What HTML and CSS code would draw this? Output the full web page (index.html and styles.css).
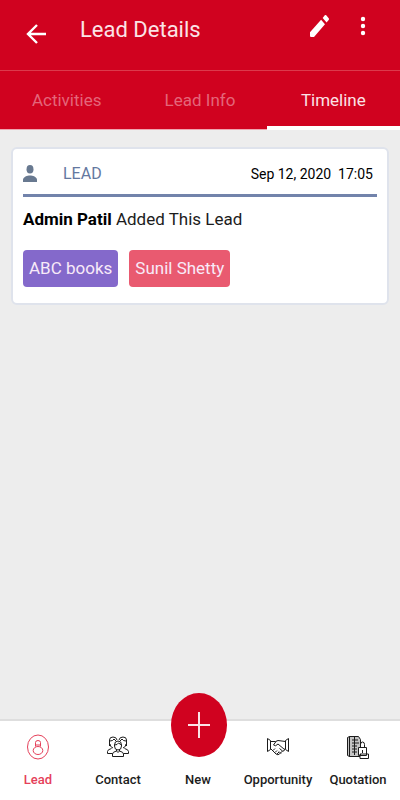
FILE: index.html
```html
<!DOCTYPE html>
<html lang="en">
<head>
<meta charset="utf-8">
<meta name="viewport" content="width=device-width, initial-scale=1">
<title>Lead Details</title>
<link rel="stylesheet" href="styles.css">
</head>
<body>
<header class="app-bar">
  <button class="icon-button back-button" type="button" aria-label="Back">
    <svg class="back-icon" viewBox="0 0 20 22" fill="none" stroke="currentColor" stroke-width="2.400"><path d="M20 11H2M11 2 2 11l9 9"/></svg>
  </button>
  <h1 class="title">Lead Details</h1>
  <button class="icon-button" type="button" aria-label="Edit">
    <svg class="edit-icon" viewBox="3 3 18 18" preserveAspectRatio="none" fill="currentColor"><path d="M3 17.200V20q0 1 1 1h2.800L17.200 10.500 13.500 6.800zM20.700 7a1 1 0 0 0 0-1.400l-2.300-2.300a1 1 0 0 0-1.400 0l-2 2.100 3.700 3.700z"/></svg>
  </button>
  <button class="icon-button" type="button" aria-label="More options">
    <svg class="more-icon" viewBox="0 0 6 20" fill="currentColor"><circle cx="3" cy="3" r="2.200"/><circle cx="3" cy="10" r="2.200"/><circle cx="3" cy="17" r="2.200"/></svg>
  </button>
</header>
<nav class="tabs" aria-label="Lead sections">
  <a class="tab" href="#activities">Activities</a>
  <a class="tab" href="#info">Lead Info</a>
  <a class="tab tab-active" href="#timeline" aria-current="page">Timeline</a>
</nav>
<main class="content">
  <article class="card">
    <div class="card-head">
      <svg class="person-icon" viewBox="0 0 16 18" preserveAspectRatio="none" fill="currentColor"><ellipse cx="8" cy="4.500" rx="4" ry="4.500"/><path d="M0 18v-2.500c0-3 5-4.500 8-4.500s8 1.500 8 4.500V18z"/></svg>
      <span class="kind">LEAD</span>
      <time class="date" datetime="2020-09-12T17:05">Sep 12, 2020&nbsp; 17:05</time>
    </div>
    <p class="event"><strong class="author">Admin Patil</strong> Added This Lead</p>
    <div class="tags">
      <span class="tag tag-company">ABC books</span>
      <span class="tag tag-person">Sunil Shetty</span>
    </div>
  </article>
</main>
<nav class="bottom-nav" aria-label="Main">
  <a class="nav-item nav-active" href="#lead">
    <svg class="nav-icon" viewBox="0 0 24 26" fill="none" stroke="currentColor"><ellipse cx="12" cy="13" rx="10.500" ry="12"/><path d="M9.500 12.500V8.500q0-2 2.500-2t2.500 2v4M9.500 11h5"/><ellipse cx="12" cy="16.500" rx="4.800" ry="4"/></svg>
    <span>Lead</span>
  </a>
  <a class="nav-item" href="#contact">
    <svg class="nav-icon" viewBox="0 0 24 26" fill="none" stroke="currentColor"><path d="M3.500 12V6q0-3 3.500-3t4 3M4 7q3 0 4-2l2 2M20.500 12V6q0-3-3.500-3t-4 3M20 7q-3 0-4-2l-2 2M4 10q0 3 3 4M20 10q0 3-3 4M1.500 19.500v-2q0-2 4-3M22.500 19.500v-2q0-2-4-3M1.500 19.500h5M22.500 19.500h-5"/><path d="M8.500 11q0-4 3.500-4t3.500 4v1q0 4-3.500 4t-3.500-4zM8.500 11q3 0 4-2l3 2M10.500 15.500V17L12 18.500l1.500-1.500v-1.500M6.500 22.500V20q0-2 4-3M17.500 22.500V20q0-2-4-3M6.500 22.500h11"/></svg>
    <span>Contact</span>
  </a>
  <a class="nav-item" href="#new">
    <span class="fab">
      <svg class="plus-icon" viewBox="0 0 22 26" fill="none" stroke="currentColor" stroke-width="2"><path d="M11 0v26M0 13h22"/></svg>
    </span>
    <span>New</span>
  </a>
  <a class="nav-item" href="#opportunity">
    <svg class="nav-icon" viewBox="0 0 24 26" fill="none" stroke="currentColor"><path d="M1.500 4.500v13M1.500 4.500l3 2v9l-3 2M22.500 4.500v13M22.500 4.500l-3 2v9l3 2M4.500 7.500h5L12 6.500l7.500 1M10 7.500 7.500 11q2 2 4.500-1l6.500 5.500q0 2-2 1.500l-3-2.500M4.500 14.500 10 20q2 1.500 3.500 0l3-3M7 16.500l2-2M9 18.500l2-2M11 20l2-2M13 17.500l2 2M19.500 14.500l-1.500 1"/></svg>
    <span>Opportunity</span>
  </a>
  <a class="nav-item" href="#quotation">
    <svg class="nav-icon" viewBox="0 0 24 26" fill="none" stroke="currentColor"><path fill="#c4c4c4" d="M1.500 3.500v18l2 1v-20zM3.500 2.500h9l2 3v17h-11z"/><path d="M6 6h6M6 9h7M6 12h5M6 15h5M6 18h5M8.500 3v18"/><path d="M14.500 13.500v-3q0-2.500 2-2.500t2 2.500v3"/><path fill="#fff" d="M14 20v4.500h8.500V20zM12.500 13.500h8v8h-8z"/><path d="M16.500 16v3"/></svg>
    <span>Quotation</span>
  </a>
</nav>
</body>
</html>
```

FILE: styles.css
```css
* { box-sizing: border-box; }

body {
  margin: 0;
  min-height: 100vh;
  display: flex;
  flex-direction: column;
  background: #ededed;
  color: #1c1c1c;
  font-family: Roboto, "Liberation Sans", sans-serif;
  font-size: 17px;
}

a { color: inherit; text-decoration: none; }
svg { display: block; }

.app-bar {
  display: flex;
  align-items: flex-start;
  height: 71px;
  padding: 10px 21px 0 20px;
  background: #d0021f;
  border-bottom: 1px solid #dc3a4c;
  color: #fff;
}

.icon-button {
  display: grid;
  place-items: center;
  width: 32px;
  height: 32px;
  padding: 0;
  border: 0;
  background: none;
  color: inherit;
}

.back-button { margin-top: 8px; }
.icon-button:last-child { margin-left: 12px; }

.back-icon { width: 20px; height: 22px; }
.edit-icon { width: 19px; height: 22px; }
.more-icon { width: 6px; height: 20px; }

.title {
  flex: 1;
  margin: 0 0 0 28px;
  color: #fbe3e6;
  font-size: 22px;
  font-weight: 400;
  line-height: 40px;
}

.tabs {
  display: grid;
  grid-template-columns: repeat(3, 1fr);
  background: #d0021f;
  color: #e4667a;
  line-height: 59px;
  text-align: center;
}

.tab { box-shadow: inset 0 -1px #efa6b0; }
.tab-active { box-shadow: inset 0 -4px #fff; color: #fbe3e6; }

.content { flex: 1; padding: 17px 11px; }

.card {
  padding: 10px;
  background: #fff;
  border: 2px solid #dfe3ec;
  border-radius: 6px;
}

.card-head {
  display: flex;
  align-items: center;
  height: 38px;
  padding: 0 4px 6px 0;
  border-bottom: 3px solid #7283ab;
}

.person-icon { width: 14px; height: 17px; color: #687990; }
.kind { margin-left: 26px; color: #6478a0; font-size: 16px; }
.date { margin-left: auto; color: #000; font-size: 14px; }

.event { margin: 10px 0 19px; line-height: 24px; }
.author { color: #000; font-weight: 700; }

.tags { display: flex; gap: 11px; padding-bottom: 6px; }

.tag {
  padding: 0 6px;
  border-radius: 4px;
  color: #f8eaf8;
  line-height: 37px;
}

.tag-company { background: #8469cb; }
.tag-person { background: #e95a70; }

.bottom-nav {
  display: grid;
  grid-template-columns: repeat(5, 1fr);
  height: 81px;
  background: #fff;
  border-top: 2px solid #dedede;
  font-size: 13px;
  font-weight: 500;
}

.nav-item {
  position: relative;
  display: flex;
  flex-direction: column;
  align-items: center;
  justify-content: flex-end;
  gap: 11px;
  padding: 0 4px 11px 0;
  line-height: 18px;
}

.nav-active { color: #e5405a; }
.nav-icon { width: 24px; height: 26px; }

.fab {
  position: absolute;
  top: -28px;
  left: 50%;
  display: grid;
  place-items: center;
  width: 56px;
  height: 64px;
  margin-left: -29px;
  border-radius: 50%;
  background: #d0021f;
  color: #fbe3e6;
}

.plus-icon { width: 22px; height: 26px; }
```
